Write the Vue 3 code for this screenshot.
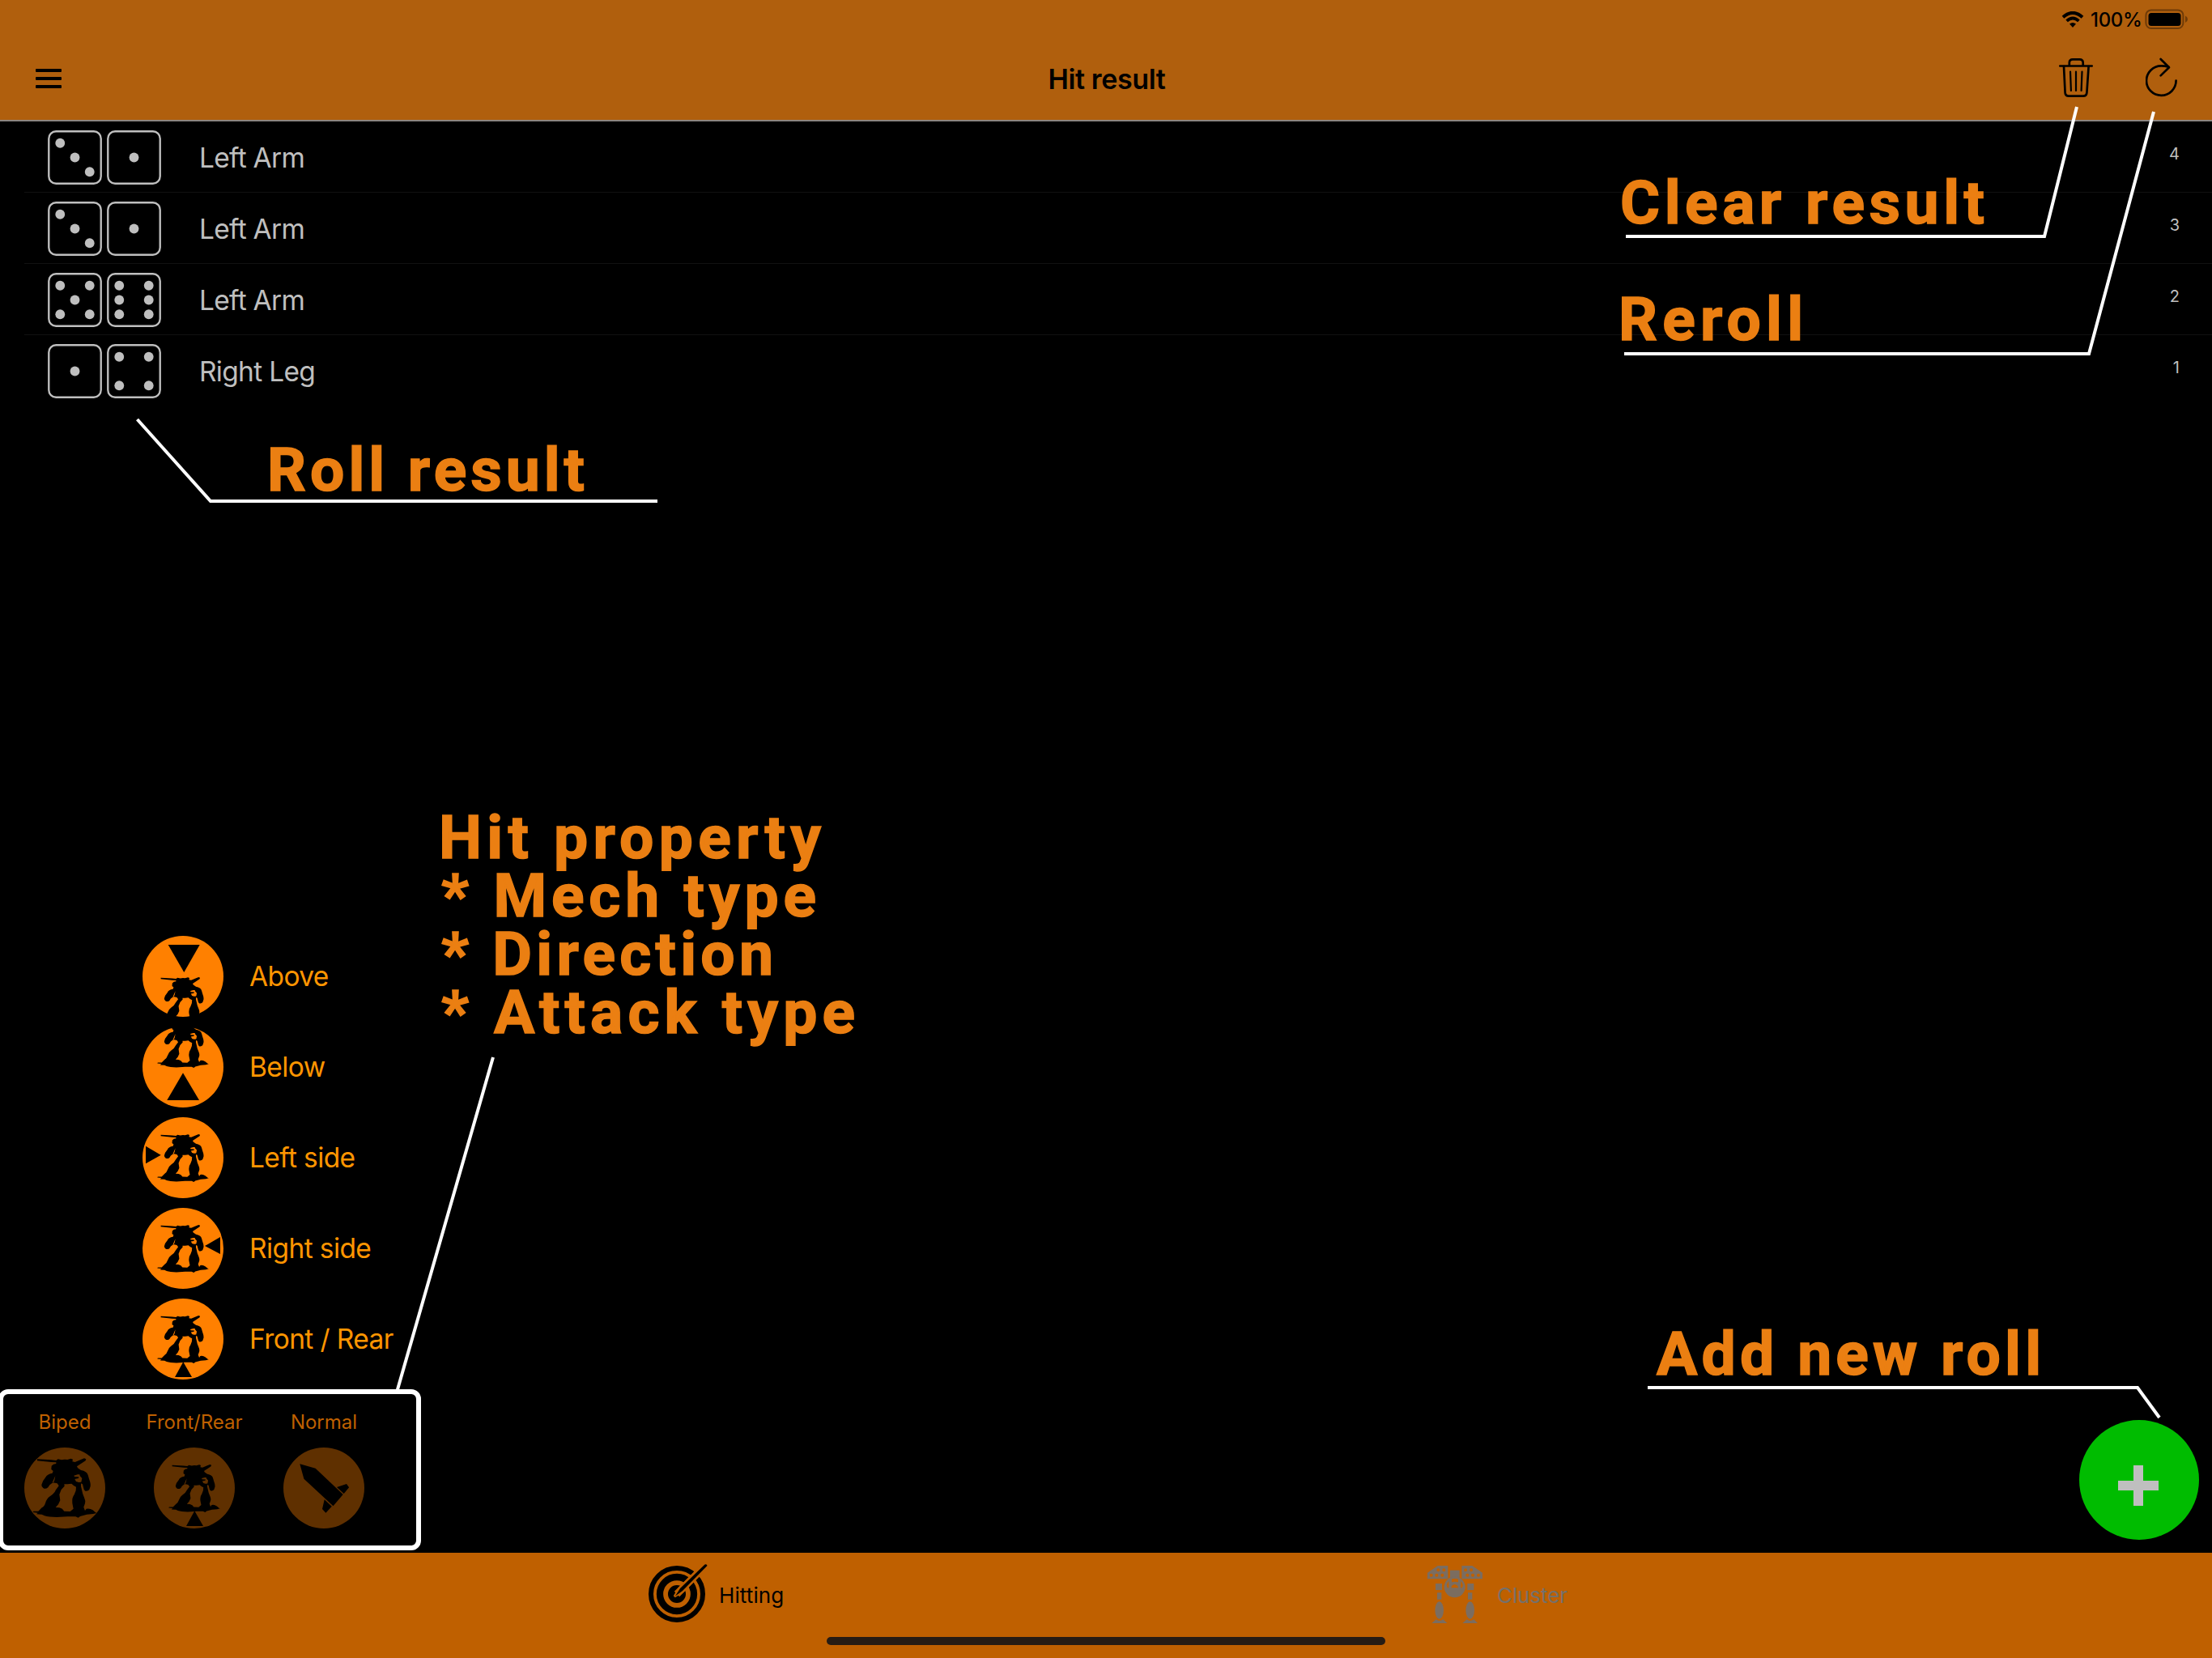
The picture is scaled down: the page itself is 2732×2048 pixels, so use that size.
<script setup>
import { ref } from 'vue'

const rolls = ref([
  { id: 4, dice: [3, 1], location: 'Left Arm' },
  { id: 3, dice: [3, 1], location: 'Left Arm' },
  { id: 2, dice: [5, 6], location: 'Left Arm' },
  { id: 1, dice: [1, 4], location: 'Right Leg' }
])

// pip centres on a 68x68 die
const pips = {
  1: [[34, 34]],
  3: [[15.5, 16], [34, 34], [52.5, 52]],
  4: [[15.5, 16], [52.5, 16], [15.5, 52], [52.5, 52]],
  5: [[15.5, 16], [52.5, 16], [34, 34], [15.5, 52], [52.5, 52]],
  6: [[15.5, 16], [52.5, 16], [15.5, 34], [52.5, 34], [15.5, 52], [52.5, 52]]
}

const small = (dy) => `translate(1.7 ${3.8 + dy}) scale(0.268)`

const directions = [
  { name: 'Above', mech: small(30), arrow: '31.7,11 70.7,11 51.3,45' },
  { name: 'Below', mech: small(-29), arrow: '50,57.3 30.3,91 70,91' },
  { name: 'Left side', mech: small(0), arrow: '4,35.7 22.7,46.7 4,57.3' },
  { name: 'Right side', mech: small(0), arrow: '96,36 77,47 96,57' },
  { name: 'Front / Rear', mech: small(0), arrow: '50.3,78.3 40,97 61,97' }
]

const properties = [
  { name: 'Biped', mech: 'translate(-10 -8) scale(0.3333)' },
  { name: 'Front/Rear', mech: small(0), arrow: '50.3,78.3 40,97 61,97' },
  { name: 'Normal', rocket: true }
]

const mechPath =
  'M78 67L130 70L148 72L155 67L168 70L180 68L190 69L203 65L210 68L208 76L218 78L252 64L259 67L257 73L225 94L228 100' +
  'L240 108Q262 112 266 126L270 140Q277 158 275 168L271 180Q266 187 256 185Q250 182 249 172L246 160L240 157L240 168L243 180' +
  'Q246 198 252 209Q258 222 255 231L250 245L255 258L260 251Q272 248 284 256L294 265L299 267L285 270L262 272L237 279L230 284L220 280' +
  'L190 280L150 282Q120 282 105 277L95 272L75 271L80 266L62 264L64 260L82 260L95 247Q104 243 108 230Q113 213 125 205' +
  'Q141 195 147 181L158 166L152 157L136 154L124 163L118 172Q108 180 100 174Q93 168 94 162Q97 148 108 136Q114 122 134 119' +
  'L137 111L130 105L131 92Q137 84 148 84L148 79L130 78L78 73Z' +
  'M178 160L179 167L167 180L160 198L163 220L156 235L146 246L160 247Q172 250 178 260L200 261L212 251L208 230Q206 210 215 199' +
  'L221 184L222 170L213 165L205 158L190 160Z' +
  'M145 129L134 154L137 156L142 145Z' +
  'M214 128L228 124L235 124L236 129L244 138L241 152L232 153L222 150L217 141L231 138L232 133L216 132Z'

const callouts = [
  { text: 'Roll result', x: 330, y: 606, width: 392 },
  { text: 'Clear result', x: 2001, y: 276, width: 450 },
  { text: 'Reroll', x: 1999, y: 420, width: 228 },
  { text: 'Hit property', x: 542, y: 1060, width: 472 },
  { text: '* Mech type', x: 545, y: 1132, width: 463 },
  { text: '* Direction', x: 545, y: 1204, width: 410 },
  { text: '* Attack type', x: 545, y: 1276, width: 511 },
  { text: 'Add new roll', x: 2046, y: 1698, width: 475 }
]
</script>

<template>
  <div class="screen">
    <header class="header">
      <div class="status">
        <svg class="wifi" viewBox="0 0 28 20">
          <path d="M2 7.2Q14 -3.4 26 7.2" stroke-width="4" />
          <path d="M6.6 11.8Q14 5.2 21.4 11.8" stroke-width="3.8" />
          <path class="solid" d="M10 15.6Q14 12.4 18 15.6L14 20Z" />
        </svg>
        <span class="percent">100%</span>
        <svg class="battery" viewBox="0 0 54 26">
          <rect class="shell" x="1.4" y="1.4" width="46" height="22.6" rx="6.5" />
          <rect x="4.5" y="5" width="40" height="16" rx="3.5" />
          <path class="tip" d="M50 8.5Q53 10 53 12.7Q53 15.5 50 17Z" />
        </svg>
      </div>
      <nav class="nav">
        <div class="burger"><i></i><i></i><i></i></div>
        <h1 class="title">Hit result</h1>
        <div class="actions">
          <svg class="trash" viewBox="0 0 44 50">
            <path d="M2.3 10.5H41.7M13.8 10V6.5Q13.8 2.3 18 2.3H26.5Q30.7 2.3 30.7 6.5V10" />
            <path d="M7 11L8.6 43.5Q9 47.6 13 47.6H31Q35 47.6 35.4 43.5L37.6 11" />
            <path class="thin" d="M15 17.5L15.9 41M22 17.5V41M29.5 17.5L28.6 41" />
          </svg>
          <svg class="reload" viewBox="0 0 40 50">
            <path d="M37.6 28.5A18.3 18.3 0 1 1 19.3 10.3Q24 10.3 28.5 11.7" />
            <path d="M18.6 2L29 12.2L18.6 22.4" />
          </svg>
        </div>
      </nav>
    </header>

    <main class="main">
      <ul class="rolls">
        <li v-for="roll in rolls" :key="roll.id" class="roll">
          <div class="dice">
            <svg v-for="(value, i) in roll.dice" :key="i" class="die" viewBox="0 0 68 68">
              <rect x="1.3" y="1.3" width="65.4" height="65.4" rx="9" />
              <circle v-for="(pip, n) in pips[value]" :key="n" :cx="pip[0]" :cy="pip[1]" r="6" />
            </svg>
          </div>
          <span class="location">{{ roll.location }}</span>
          <span class="number">{{ roll.id }}</span>
        </li>
      </ul>

      <div class="bottom">
        <div class="controls">
          <ul class="directions">
            <li v-for="item in directions" :key="item.name" class="direction">
              <svg class="badge" viewBox="0 0 100 100">
                <circle cx="50" cy="50" r="50" />
                <path class="ink" fill-rule="evenodd" :d="mechPath" :transform="item.mech" />
                <polygon class="ink" :points="item.arrow" />
              </svg>
              <span>{{ item.name }}</span>
            </li>
          </ul>
          <div class="properties">
            <div v-for="item in properties" :key="item.name" class="property">
              <span>{{ item.name }}</span>
              <svg class="badge" viewBox="0 0 100 100">
                <circle cx="50" cy="50" r="50" />
                <path v-if="item.mech" class="ink" fill-rule="evenodd" :d="mechPath" :transform="item.mech" />
                <polygon v-if="item.arrow" class="ink" :points="item.arrow" />
                <path
                  v-if="item.rocket"
                  class="ink"
                  d="M20.3 20.3L39.6 25.7L73.7 58L61.5 72.3L25.4 38.7ZM66 49L78 45L81.1 49.3L74.7 57ZM50.7 64.3L59.8 72.7L52.4 80.7L48 76Z"
                />
              </svg>
            </div>
          </div>
        </div>
        <button class="add" aria-label="Add new roll">
          <svg viewBox="0 0 50 50"><path d="M19 0H31V19H50V31H31V50H19V31H0V19H19Z" /></svg>
        </button>
      </div>
    </main>

    <footer class="footer">
      <div class="tabs">
        <div class="tab tab-hitting">
          <svg class="target" viewBox="0 0 76 76">
            <circle class="ring" cx="36" cy="39" r="32" stroke-width="6" />
            <circle class="ring" cx="36" cy="39" r="21" stroke-width="8.3" />
            <circle cx="36" cy="39" r="11" />
            <path class="gap" d="M36 39L67 8" />
            <path class="edge" d="M33 42L39 32L70 1L74 4L43 36Z" />
            <path class="dart" d="M34 41.5L40 32L70.5 2.5Q73 1.5 73.5 4L43 35Z" />
          </svg>
          <span>Hitting</span>
        </div>
        <div class="tab tab-cluster">
          <svg class="walker" viewBox="0 0 204 214">
            <path
              fill-rule="evenodd"
              d="M38 0H76V49H0V26ZM34 16a6 6 0 1 0 12 0a6 6 0 1 0-12 0M55 16a6 6 0 1 0 12 0a6 6 0 1 0-12 0M8 35a6 6 0 1 0 12 0a6 6 0 1 0-12 0M28 35a6 6 0 1 0 12 0a6 6 0 1 0-12 0M49 35a6 6 0 1 0 12 0a6 6 0 1 0-12 0"
            />
            <path
              fill-rule="evenodd"
              d="M127 0H166L204 26V49H127ZM135 16a6 6 0 1 0 12 0a6 6 0 1 0-12 0M156 16a6 6 0 1 0 12 0a6 6 0 1 0-12 0M142 35a6 6 0 1 0 12 0a6 6 0 1 0-12 0M162 35a6 6 0 1 0 12 0a6 6 0 1 0-12 0M183 35a6 6 0 1 0 12 0a6 6 0 1 0-12 0"
            />
            <path d="M84 17H119V48H84Z" />
            <path
              fill-rule="evenodd"
              d="M101 40A39 39 0 1 0 101 118A39 39 0 1 0 101 40ZM79 57Q66 72 76 83L79 80ZM124 57Q137 72 126 83L123 80ZM90 50V61Q101 57 114 61V50Q101 45 90 50ZM88 82Q90 70 101 69Q112 70 114 82Z"
            />
            <path d="M30 66H54V90H30ZM148 66H172V90H148ZM36 100H52V125H36ZM150 100H166V125H150Z" />
            <ellipse cx="44" cy="165" rx="16" ry="32" />
            <ellipse cx="158" cy="165" rx="16" ry="32" />
            <path d="M16 213L32 199Q44 209 58 199L73 213ZM130 213L146 199Q158 209 172 199L186 213Z" />
          </svg>
          <span>Cluster</span>
        </div>
      </div>
      <div class="home-bar"></div>
    </footer>

    <!-- help overlay: leader lines and captions over the live screen -->
    <svg class="callouts" viewBox="0 0 2732 2048">
      <polyline points="169.5,518 260,619 812,619" />
      <polyline points="2565,132 2525,292 2008,292" />
      <polyline points="2660,138 2580,437 2006,437" />
      <polyline points="609,1306 490.5,1718" />
      <polyline points="2035,1714 2640,1714 2667,1751" />
      <rect x="1" y="1719" width="516" height="193" rx="9" />
      <text
        v-for="item in callouts"
        :key="item.text"
        :x="item.x"
        :y="item.y"
        :textLength="item.width"
      >{{ item.text }}</text>
    </svg>
  </div>
</template>

<style>
body {
  margin: 0;
  background: #000;
}
</style>

<style scoped>
.screen {
  position: relative;
  display: flex;
  flex-direction: column;
  width: 2732px;
  height: 2048px;
  overflow: hidden;
  background: #000;
  font-family: Inter, 'Liberation Sans', sans-serif;
}
.header {
  box-sizing: border-box;
  height: 150px;
  background: #b05f0d;
  border-bottom: 2px solid #8c8580;
}
.status {
  display: flex;
  justify-content: flex-end;
  align-items: center;
  height: 48px;
  padding-right: 29px;
}
.wifi {
  width: 28px;
  height: 20px;
  margin-right: 8px;
  fill: none;
  stroke: #000;
}
.wifi .solid {
  fill: #000;
  stroke: none;
}
.percent {
  width: 65px;
  font-size: 24px;
  font-weight: 500;
  letter-spacing: -0.3px;
}
.battery {
  width: 54px;
  height: 26px;
  margin-left: 2px;
}
.battery .shell {
  fill: none;
  stroke: #6e3b08;
  stroke-width: 2;
}
.battery .tip {
  fill: #6e3b08;
}
.nav {
  display: grid;
  grid-template-columns: 1fr auto 1fr;
  align-items: center;
  height: 98px;
  padding: 0 42px 0 44px;
}
.burger {
  display: flex;
  flex-direction: column;
  gap: 6px;
}
.burger i {
  width: 32px;
  height: 4px;
  border-radius: 1px;
  background: #000;
}
.title {
  margin: 0;
  font-size: 34px;
  font-weight: 600;
  letter-spacing: -0.35px;
}
.actions {
  display: flex;
  justify-content: flex-end;
  gap: 64px;
  padding-bottom: 2px;
}
.actions svg {
  height: 50px;
  fill: none;
  stroke: #000;
  stroke-width: 2.7;
  stroke-linecap: round;
  stroke-linejoin: round;
}
.trash {
  width: 44px;
}
.trash .thin {
  stroke-width: 2.2;
}
.reload {
  width: 40px;
}
.main {
  flex: 1;
  display: flex;
  flex-direction: column;
  justify-content: space-between;
}
ul {
  list-style: none;
  margin: 0;
  padding: 0;
}
.roll {
  display: flex;
  align-items: center;
  box-sizing: border-box;
  height: 88px;
  margin-left: 30px;
  padding: 2px 40px 0 29px;
  border-bottom: 1px solid #111;
  color: #bfbfbf;
}
.roll:last-child {
  border-bottom-color: transparent;
}
.dice {
  display: flex;
  gap: 6px;
  width: 187px;
}
.die {
  width: 67px;
  height: 67px;
  fill: #bfbfbf;
}
.die rect {
  fill: none;
  stroke: #bfbfbf;
  stroke-width: 2.4;
}
.location {
  flex: 1;
  font-size: 33.5px;
  letter-spacing: -0.7px;
}
.number {
  margin-top: -9px;
  font-size: 20px;
}
.bottom {
  display: flex;
  justify-content: space-between;
  align-items: flex-end;
  padding: 0 16px 16px 0;
}
.controls {
  padding-bottom: 14px;
}
.directions {
  display: flex;
  flex-direction: column;
  gap: 12px;
  padding-left: 176px;
}
.direction {
  display: flex;
  align-items: center;
  gap: 32px;
  color: #ff9500;
  font-size: 33.5px;
  letter-spacing: -0.6px;
}
.direction span {
  padding-bottom: 1px;
}
.badge {
  display: block;
  width: 100px;
  height: 100px;
  fill: #ff8000;
}
.ink {
  fill: #000;
}
.properties {
  display: flex;
  height: 184px;
}
.property {
  display: flex;
  flex-direction: column;
  justify-content: flex-end;
  align-items: center;
  gap: 16px;
  width: 160px;
  color: #bf6000;
  font-size: 24px;
  line-height: 30px;
}
.property .badge {
  fill: #5f3000;
}
.add {
  display: flex;
  align-items: center;
  justify-content: center;
  width: 148px;
  height: 148px;
  padding: 14px 2px 0 0;
  border: none;
  border-radius: 50%;
  background: #00bc00;
}
.add svg {
  width: 50px;
  height: 50px;
  fill: #bfbfbf;
}
.footer {
  display: flex;
  flex-direction: column;
  align-items: center;
  justify-content: space-between;
  height: 130px;
  background: #bf6000;
}
.tabs {
  display: flex;
  width: 100%;
  height: 100px;
}
.tab {
  display: flex;
  align-items: center;
  box-sizing: border-box;
  height: 104px;
  font-size: 26px;
  letter-spacing: 0.1px;
}
.tab-hitting {
  width: 1763px;
  padding-left: 800px;
}
.target {
  width: 76px;
  height: 76px;
  margin-top: -4px;
  margin-right: 12px;
}
.target .ring {
  fill: none;
  stroke: #000;
}
.target .gap {
  fill: none;
  stroke: #bf6000;
  stroke-width: 9;
}
.target .edge {
  fill: none;
  stroke: #bf6000;
  stroke-width: 3;
}
.target .dart {
  fill: #000;
}
.tab-cluster {
  color: #74706b;
  letter-spacing: -0.1px;
}
.walker {
  width: 68px;
  height: 71.3px;
  margin-top: 0;
  margin-right: 18px;
  fill: #7b6d60;
}
.home-bar {
  width: 690px;
  height: 10px;
  margin-bottom: 16px;
  border-radius: 5px;
  background: #261c14;
}
.callouts {
  position: absolute;
  inset: 0;
  width: 2732px;
  height: 2048px;
}
.callouts polyline {
  fill: none;
  stroke: #fff;
  stroke-width: 4;
}
.callouts rect {
  fill: none;
  stroke: #fff;
  stroke-width: 6;
}
.callouts text {
  fill: #eb7f12;
  stroke: #eb7f12;
  stroke-width: 1.5;
  font-family: Roboto, 'Liberation Sans', sans-serif;
  font-size: 75px;
  font-weight: 700;
}
</style>
